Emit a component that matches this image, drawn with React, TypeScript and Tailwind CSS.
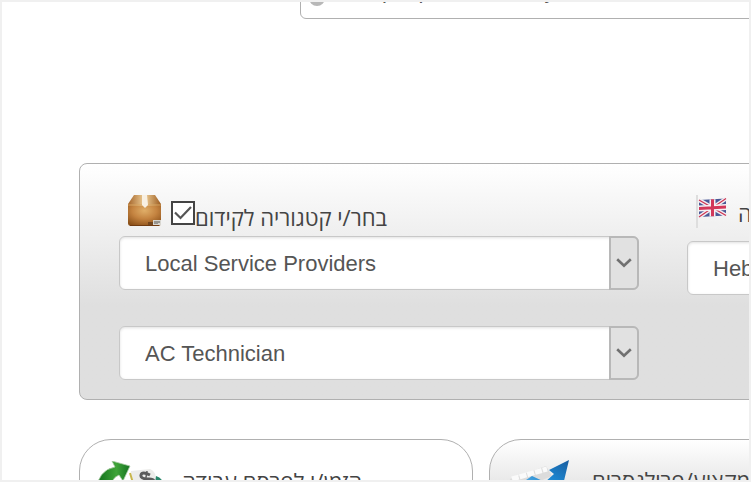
import React from 'react';

interface SelectFieldProps {
  id: string;
  label: string;
  options: string[];
}

const SelectField = ({ id, label, options }: SelectFieldProps) => (
  <div className="relative">
    <select
      id={id}
      aria-label={label}
      className="block w-full h-[54px] appearance-none rounded-md border border-[#c8c8c8] bg-white pl-[25px] pr-10 text-[22px] text-[#555] shadow-[inset_0_1px_3px_rgba(0,0,0,0.12)]"
    >
      {options.map((option) => (
        <option key={option}>{option}</option>
      ))}
    </select>
    <span className="pointer-events-none absolute inset-y-0 right-0 flex w-[30px] items-center justify-center rounded-r-md border-2 border-[#b8b8b8] bg-[#e1e1e1]">
      <svg width="16" height="10" viewBox="0 0 16 10" fill="none" stroke="#707070" strokeWidth="2.6">
        <path d="M1.2 1.2 8 7.8l6.800-6.600" />
      </svg>
    </span>
  </div>
);

const BoxIcon = () => (
  <svg width="34" height="32" viewBox="0 0 34 32">
    <defs>
      <radialGradient id="boxFront" cx="50%" cy="30%" r="75%">
        <stop offset="0" stopColor="#e0ae68" />
        <stop offset="0.5" stopColor="#c48340" />
        <stop offset="1" stopColor="#8a4f18" />
      </radialGradient>
      <linearGradient id="boxTop" x1="0" x2="1" y1="0" y2="0">
        <stop offset="0" stopColor="#a5652a" />
        <stop offset="0.5" stopColor="#efcf98" />
        <stop offset="1" stopColor="#9c5c20" />
      </linearGradient>
    </defs>
    <path d="M0 9v19q0 3 3 3h27q3 0 3-3V9z" fill="url(#boxFront)" />
    <path d="M6 0h21l6 9v2H0V9z" fill="url(#boxTop)" />
    <path d="M0 10h33" stroke="#d9a45e" strokeWidth="1" />
    <path d="M14 0h5l1 10-3 3-3-3z" fill="#f8f0e2" />
    <path d="M2 30.500h29" stroke="#713b10" strokeWidth="1" />
    <path d="M20 27h5v3h-5z" fill="#75471e" />
    <path d="M25 25h8v5h-8z" fill="#d8d6d0" />
    <path d="M27 26v3m2-3v3m2-3v2" stroke="#59554e" strokeWidth="1" />
  </svg>
);

const FlagIcon = () => (
  <svg width="32" height="33" viewBox="0 0 32 33">
    <path d="M0 0h2v33H0z" fill="#dedede" />
    <path d="M2 31q9-6 19-4v6H2z" fill="#f1f1f1" />
    <g transform="translate(3 4) skewY(-3)">
      <path d="M0 1h27v17H0z" fill="#4a5896" />
      <path d="m0 1 27 17M27 1 0 18" stroke="#f1edf2" strokeWidth="4" />
      <path d="m0 1 27 17M27 1 0 18" stroke="#cf3350" strokeWidth="1.200" />
      <path d="M13.500 1v17M0 9.500h27" stroke="#f6f1f4" strokeWidth="6" />
      <path d="M13.500 1v17M0 9.500h27" stroke="#d2385a" strokeWidth="3" />
    </g>
  </svg>
);

const RecycleMoneyIcon = () => (
  <svg width="72" height="64" viewBox="0 0 72 64">
    <defs>
      <linearGradient id="leaf" x1="0" x2="1">
        <stop offset="0" stopColor="#0c6b18" />
        <stop offset="0.600" stopColor="#3fa438" />
        <stop offset="1" stopColor="#157321" />
      </linearGradient>
    </defs>
    <path d="M35 10l19-2q5 2 6 8l4 6-4 18H37z" fill="#ececea" />
    <path d="M34 12l6 20" stroke="#c8b64c" strokeWidth="2" />
    <path d="M0 30Q2 9 19 6L16 0l18 5-7 15-4-6Q14 17 13 34z" fill="url(#leaf)" stroke="#a9cba5" strokeWidth="0.800" />
    <path d="M60 15q6 2 8 8l-4 10-5-10z" fill="#28866a" />
    <path d="M54 14q-8-4-9 0t8 4 1 7-9-1" fill="none" stroke="#5c5c5c" strokeWidth="3" />
    <path d="M51 10l-3 19" stroke="#5c5c5c" strokeWidth="1.500" />
  </svg>
);

const GrowthIcon = () => (
  <svg width="68" height="64" viewBox="-4 0 68 64">
    <defs>
      <linearGradient id="arrow" x1="0" x2="1" y1="1" y2="0">
        <stop offset="0" stopColor="#8fd0f4" />
        <stop offset="0.600" stopColor="#1c86d0" />
        <stop offset="1" stopColor="#1a5d9f" />
      </linearGradient>
    </defs>
    <path d="M0 19l36-13 6 10L4 32z" fill="#dcdcdc" />
    <path d="M2 19l35-10" stroke="#fafafa" strokeWidth="5" strokeDasharray="7 1" />
    <path d="M59 0l-6 25-5-5-8 15-16-15-16 16-7-6 21-14 13 6 9-8-5-4z" fill="url(#arrow)" />
  </svg>
);

interface ActionCardProps {
  title: string;
  icon: React.ReactNode;
  className: string;
}

const ActionCard = ({ title, icon, className }: ActionCardProps) => (
  <button
    type="button"
    className={`flex h-[104px] shrink-0 items-start rounded-[32px] border border-[#b0b0b0] text-[22px] font-medium text-[#444] ${className}`}
  >
    <span className="w-[86px] shrink-0">{icon}</span>
    <span dir="rtl" className="mt-1 whitespace-nowrap">{title}</span>
  </button>
);

const App = () => {
  return (
    <main className="h-screen overflow-hidden border-2 border-[#f0f0f0] bg-white font-['Liberation_Sans',Arial,sans-serif] text-[#444]">
      <div className="flex h-[17px] items-end pl-[298px]">
        <div className="flex h-[54px] w-full min-w-[520px] items-center gap-2 rounded-md border border-[#b0b0b0] bg-white pl-2">
          <span className="mt-3 size-4 shrink-0 rounded-full bg-[#b8b8b8]" />
          <input
            aria-label="Search"
            defaultValue="Find people for the city"
            className="mb-1 w-full bg-transparent text-[22px] text-[#555]"
          />
        </div>
      </div>

      <div className="w-[1100px] pl-[77px] pt-36">
        <section className="flex gap-12 rounded-lg border border-[#b0b0b0] bg-linear-to-b from-white to-[#dfdfdf] to-60% px-[39px] pb-[19px] pt-[31px]">
          <div className="w-[520px] shrink-0">
            <div className="flex h-[41px] items-start pl-[9px]">
              <BoxIcon />
              <span className="relative ml-[9px] mt-[6px] size-6 shrink-0">
                <input
                  id="category"
                  type="checkbox"
                  defaultChecked
                  className="peer block size-6 appearance-none border-2 border-[#444] bg-white"
                />
                <svg className="pointer-events-none absolute inset-0 hidden peer-checked:block" width="24" height="24" viewBox="0 0 24 24" fill="none" stroke="#555" strokeWidth="2.200">
                  <path d="M4 11.500l5.500 5.500L20 6" />
                </svg>
              </span>
              <label htmlFor="category" dir="rtl" className="mt-2 whitespace-nowrap font-['Open_Sans','Liberation_Sans',sans-serif] text-[22px] leading-7">
                בחר/י קטגוריה לקידום
              </label>
            </div>
            <div className="flex flex-col gap-9">
              <SelectField id="main-category" label="Category" options={['Local Service Providers']} />
              <SelectField id="sub-category" label="Profession" options={['AC Technician']} />
            </div>
          </div>

          <div className="w-[360px] shrink-0">
            <div className="flex h-[46px] items-start pl-[9px]">
              <FlagIcon />
              <label htmlFor="language" dir="rtl" className="ml-[10px] mt-1 whitespace-nowrap font-['Open_Sans','Liberation_Sans',sans-serif] text-[22px] leading-7">
                שפה
              </label>
            </div>
            <SelectField id="language" label="Language" options={['Hebrew']} />
          </div>
        </section>

        <div className="mt-[39px] flex gap-4 font-['Open_Sans','Liberation_Sans',sans-serif]">
          <ActionCard title="הזמן/י לפרסם עבודה" icon={<RecycleMoneyIcon />} className="w-[394px] bg-white pl-4 pt-[21px]" />
          <ActionCard title="מקצוע/פרילנסרים" icon={<GrowthIcon />} className="w-[394px] bg-linear-to-b from-white to-[#dedede] to-60% pl-4 pt-[20px]" />
        </div>
      </div>
    </main>
  );
};

export default App;
